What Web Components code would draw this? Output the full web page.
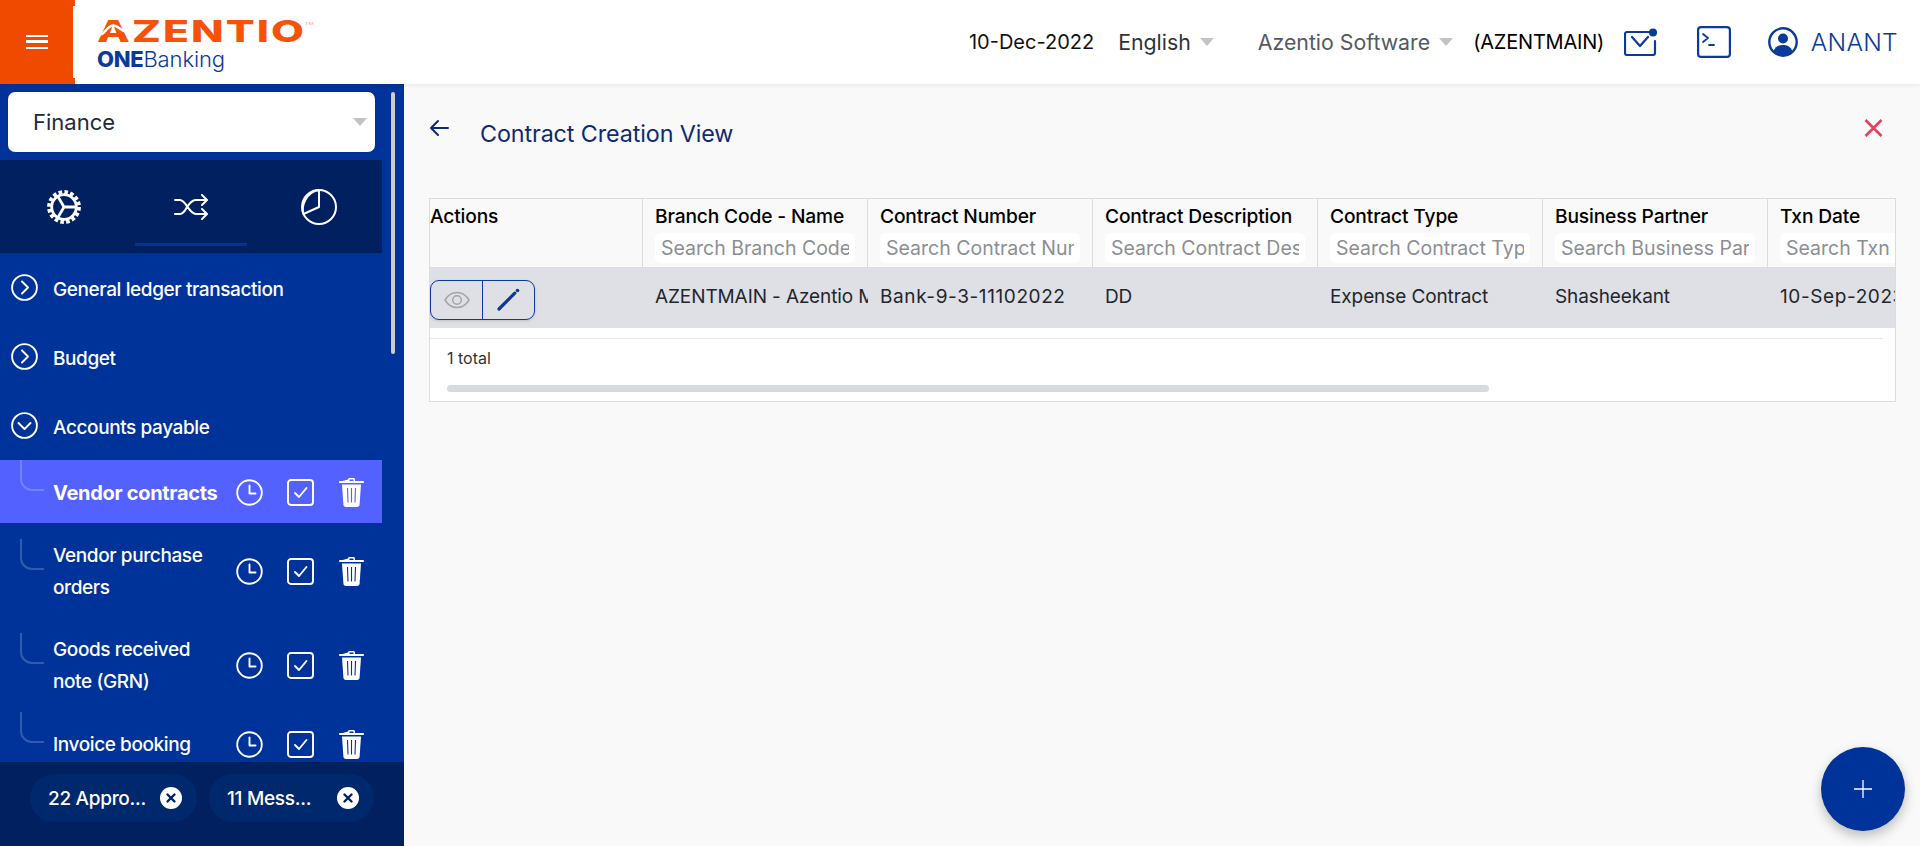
<!DOCTYPE html>
<html lang="en"><head><meta charset="utf-8"><title>Contract Creation View</title>
<style>
html,body{margin:0;height:100%;overflow:hidden;background:#f9f9f9;font-family:Inter,"Noto Sans",sans-serif}
</style></head><body>
<app-shell>
  <app-header slot="top"></app-header>
  <side-nav slot="side">
    <nav-group label="General ledger transaction"></nav-group>
    <nav-group label="Budget"></nav-group>
    <nav-group label="Accounts payable" open></nav-group>
    <nav-item active h="63">Vendor contracts</nav-item>
    <nav-item h="78">Vendor purchase<br>orders</nav-item>
    <nav-item h="63">Goods received<br>note (GRN)</nav-item>
    <nav-item h="63">Invoice booking</nav-item>
  </side-nav>
  <contract-view slot="main"></contract-view>
</app-shell>
<script>
const ICONS={
 chevR:'<svg viewBox="0 0 27 27" width="27" height="27" fill="none" stroke="#fff" stroke-width="1.9" stroke-linecap="round" stroke-linejoin="round"><circle cx="13.5" cy="13.5" r="12.4"/><path d="M11 7.5l6 6-6 6"/></svg>',
 chevD:'<svg viewBox="0 0 27 27" width="27" height="27" fill="none" stroke="#fff" stroke-width="1.9" stroke-linecap="round" stroke-linejoin="round"><circle cx="13.5" cy="13.5" r="12.4"/><path d="M7.5 11l6 6 6-6"/></svg>',
 clock:'<svg viewBox="0 0 27 27" width="27" height="27" fill="none" stroke="#fff" stroke-width="1.9" stroke-linecap="round" stroke-linejoin="round"><circle cx="13.5" cy="13.5" r="12.3"/><path d="M13.5 6.5v8h6"/></svg>',
 check:'<svg viewBox="0 0 27 27" width="27" height="27" fill="none" stroke="#fff" stroke-width="1.9" stroke-linecap="round" stroke-linejoin="round"><rect x="1" y="1" width="25" height="25" rx="3"/><path d="M8 14l4 4 7.500-9"/></svg>',
 trash:'<svg viewBox="0 0 25 29" width="25" height="29"><path fill="#fff" d="M9 1.500C9 .7 9.700 0 10.500 0h4c.8 0 1.500.7 1.500 1.500V3h8c.6 0 1 .4 1 1s-.4 1-1 1H1C.4 5 0 4.600 0 4s.4-1 1-1h2.800zM10.500 1.500V3h4V1.500z"/><path fill="#fff" d="M3 6.500h19l-1.400 20c-.1 1.400-1 2.500-2.600 2.500H7c-1.600 0-2.500-1.100-2.600-2.500z"/><path stroke="#PLACE" stroke-width="1.100" d="M8.500 10l.5 14.500M12.500 10v14.500M16.500 10l-.5 14.500"/></svg>',
 gear:'<svg viewBox="0 0 34 34" width="34" height="34" fill="none" stroke="#fff"><circle cx="17" cy="17" r="14.700" stroke-width="4.400" stroke-dasharray="3.500 2.270"/><circle cx="17" cy="17" r="12.300" stroke-width="2.800"/><path stroke-width="2.800" d="M17 17H29M17 17L11 6.600M17 17L11 27.400"/></svg>',
 shuffle:'<svg viewBox="0 0 34 26" width="34" height="26" fill="none" stroke="#fff" stroke-width="2" stroke-linecap="round" stroke-linejoin="round"><path d="M1 6h5c6 0 9 14 16 14h10M1 20h5c3 0 5-3 7-7 3-4 5-7 9-7h10"/><path d="M28 1l5 5-5 5M28 15l5 5-5 5"/></svg>',
 pie:'<svg viewBox="0 0 37 37" width="37" height="37" fill="none" stroke="#fff" stroke-width="2" stroke-linejoin="round"><circle cx="19" cy="19" r="17"/><path d="M19 2v17L3.500 26C1 18 6 4 19 2z"/></svg>',
 mail:'<svg viewBox="0 0 34 28" width="34" height="28" fill="none" stroke="#0b3a99" stroke-width="2.200" stroke-linecap="round" stroke-linejoin="round"><path d="M26 4H3a2 2 0 0 0-2 2v19a2 2 0 0 0 2 2h26a2 2 0 0 0 2-2V13"/><path d="M8 9l8 9 8-9"/><circle cx="29" cy="4.500" r="4" fill="#0b3a99" stroke="none"/></svg>',
 term:'<svg viewBox="0 0 34 32" width="34" height="32" fill="none" stroke="#0b3a99" stroke-width="2.200" stroke-linecap="round" stroke-linejoin="round"><rect x="1.100" y="1.100" width="31.800" height="29.800" rx="3"/><path d="M6 8l5 4-5 4M12 19h5" stroke-width="1.800"/></svg>',
 user:'<svg viewBox="0 0 30 30" width="30" height="30"><circle cx="15" cy="15" r="13.700" fill="none" stroke="#0b3a99" stroke-width="2.400"/><circle cx="15" cy="11.500" r="5" fill="#0b3a99"/><path fill="#0b3a99" d="M5.500 24.500c1.500-4.500 5-6.500 9.500-6.500s8 2 9.500 6.500C22 27.500 18.500 29 15 29s-7-1.500-9.500-4.500z"/></svg>',
 back:'<svg viewBox="0 0 20 18" width="20" height="18" fill="none" stroke="#0f2a72" stroke-width="2" stroke-linecap="round" stroke-linejoin="round"><path d="M19 9H2M9 2L2 9l7 7"/></svg>',
 close:'<svg viewBox="0 0 19 18" width="19" height="18" fill="none" stroke="#e8405a" stroke-width="2.600"><path d="M1.500 1l16 16M17.500 1l-16 16"/></svg>',
 eye:'<svg viewBox="0 0 26 18" width="26" height="18" fill="none" stroke="#a3a5a8" stroke-width="1.500"><path d="M1 9c3-5 7-7.500 12-7.500S22 4 25 9c-3 5-7 7.500-12 7.500S4 14 1 9z"/><circle cx="13" cy="9" r="4.300"/></svg>',
 pen:'<svg viewBox="0 0 24 24" width="24" height="24" fill="none" stroke="#0b3a99" stroke-linecap="round"><path stroke-width="3.200" d="M2 21L17.800 5.200"/><path stroke-width="3.600" d="M20.500 2.500h.01"/></svg>',
 x:'<svg viewBox="0 0 22 22" width="22" height="22"><circle cx="11" cy="11" r="11" fill="#fff"/><path stroke="#002060" stroke-width="2.400" stroke-linecap="round" d="M7.500 7.500l7 7M14.500 7.500l-7 7"/></svg>',
 plus:'<svg viewBox="0 0 18 18" width="18" height="18" stroke="#fff" stroke-width="1.300"><path d="M9 0v18M0 9h18"/></svg>'
};
const ic=(n,bg)=>ICONS[n].replace('#PLACE',bg||'#003399');
class Base extends HTMLElement{
  render(css,html){this.attachShadow({mode:'open'}).innerHTML=`<style>${css}</style>${html}`}
}
customElements.define('app-shell',class extends Base{connectedCallback(){this.render(`
  :host{display:grid;grid-template:84px 1fr/404px 1fr;width:1920px;height:846px;position:relative}
  .top{grid-column:1/3;position:relative;z-index:2}
  .main{min-width:0;overflow:hidden}
  .fab{position:absolute;left:1821px;top:747px;width:84px;height:84px;border-radius:50%;background:#003399;display:flex;align-items:center;justify-content:center;box-shadow:0 5px 12px rgba(0,0,0,.25)}
  `,`<div class="top"><slot name="top"></slot></div><slot name="side"></slot><div class="main"><slot name="main"></slot></div><div class="fab">${ic('plus')}</div>`)}});
customElements.define('az-logo',class extends Base{connectedCallback(){this.render(`
  :host{display:block;align-self:flex-start;padding-left:22px;width:240px;color:#0b3a99;position:relative}
  .a{display:block;height:34px;margin-top:7px;font:800 30px/34px Inter,sans-serif;color:#f85208;letter-spacing:1.500px;transform:scaleX(1.42);transform-origin:left center;white-space:nowrap}
  .tm{font-size:4px;font-weight:400;vertical-align:17px;color:#f9a;letter-spacing:0;margin-left:-1px}
  .b{display:block;font:300 22px/26px Inter,sans-serif;margin-top:5px;letter-spacing:-.1px;white-space:nowrap}
  b{font-weight:800;letter-spacing:-.3px}
  svg{position:absolute;left:22px;top:12px}`,
  `<span class="a">AZENTIO<span class="tm">TM</span></span><svg width="34" height="24" viewBox="0 0 34 24" fill="none"><path d="M4 22.500C9 21 10 13.500 16.500 13.500 22 13.500 24 20 30 19.500" stroke="#fff" stroke-width="2.400"/></svg><span class="b"><b>ONE</b>Banking</span>`)}});
customElements.define('caret-down',class extends Base{connectedCallback(){this.render(`
  :host{display:inline-block;width:0;height:0;border:7px solid transparent;border-top:8px solid #c4c4c4;border-bottom:0}`,``)}});
customElements.define('app-header',class extends Base{connectedCallback(){this.render(`
  :host{display:flex;align-items:center;height:84px;background:#fff;box-shadow:0 1px 5px rgba(0,0,0,.08);font-family:Inter,sans-serif}
  .menu{width:75px;height:84px;flex:none;display:flex;align-items:center;justify-content:center;padding-right:2px;box-sizing:border-box;
    background:linear-gradient(#f04a00,#f04a00) 0 0/73px 100% no-repeat,linear-gradient(#f04a00,#f04a00) 0 0/75px 6px no-repeat,linear-gradient(#f04a00,#f04a00) 0 100%/75px 6px no-repeat}
  .burger{width:22px;height:14px;border-top:2.500px solid #fff;border-bottom:2.500px solid #fff;position:relative;box-sizing:border-box}
  .burger:after{content:"";position:absolute;left:0;right:0;top:3.250px;height:2.500px;background:#fff}
  .sp{flex:1}
  .date{font-size:20px;color:#111;margin-right:24px}
  .lang{font-size:21.300px;color:#2e333b;margin-right:9px}
  .org{font-size:21.300px;color:#555a61;margin-right:9px}
  caret-down.c1{margin-right:44px}caret-down.c2{margin-right:20px}
  .code{font-size:20px;color:#000;font-weight:400;margin-right:20px;letter-spacing:-.2px}
  .i{display:flex;flex:none}
  .name{font-size:24.500px;color:#0b3a99;font-weight:300;margin-left:12.500px;margin-right:22px;letter-spacing:.3px}
  `,`<div class="menu"><div class="burger"></div></div><az-logo></az-logo><div class="sp"></div>
  <span class="date">10-Dec-2022</span><span class="lang">English</span><caret-down class="c1"></caret-down>
  <span class="org">Azentio Software</span><caret-down class="c2"></caret-down>
  <span class="code">(AZENTMAIN)</span><span class="i" style="margin-right:39px">${ic('mail')}</span>
  <span class="i" style="margin-right:37px">${ic('term')}</span><span class="i">${ic('user')}</span><span class="name">ANANT</span>`)}});
customElements.define('side-nav',class extends Base{connectedCallback(){this.render(`
  :host{display:flex;flex-direction:column;background:#003399;height:762px;position:relative;font-family:Inter,sans-serif;overflow:hidden}
  .sel{margin:8px 29px 8px 8px;height:60px;background:#fff;border-radius:7px;display:flex;align-items:center;justify-content:space-between;padding:0 8px 0 25px;font-size:22px;color:#222a35;box-sizing:border-box;flex:none;box-shadow:0 0 2px rgba(0,0,0,.3)}
  .tabs{width:382px;height:93px;background:#002060;display:flex;flex:none;position:relative}
  .tab{flex:none;display:flex;align-items:center;justify-content:center;height:93px}
  .ind{position:absolute;left:135px;top:83px;width:112px;height:3px;background:#003399}
  .list{flex:1;overflow:hidden;min-height:0}
  .bar{position:absolute;left:391px;top:8px;width:4px;height:262px;border-radius:2px;background:#ccc}
  .foot{flex:none;height:84px;background:#002060;display:flex;align-items:flex-start;gap:12px;padding:12px 0 0 30px;box-sizing:border-box;position:relative;z-index:1}
  `,`<div class="sel">Finance<caret-down></caret-down></div>
  <div class="tabs"><span class="tab" style="margin-left:47px;width:34px">${ic('gear')}</span>
    <span class="tab" style="margin-left:93px;width:34px">${ic('shuffle')}</span>
    <span class="tab" style="margin-left:92px;width:37px">${ic('pie')}</span><span class="ind"></span></div>
  <div class="list"><slot></slot></div><div class="bar"></div>
  <div class="foot"><note-chip w="167">22 Appro...</note-chip><note-chip w="165">11 Mess...</note-chip></div>`)}});
customElements.define('nav-group',class extends Base{connectedCallback(){this.render(`
  :host{display:flex;align-items:center;height:69px;gap:15px;padding-left:11px;color:#fff;font-size:19px;font-weight:500;letter-spacing:-.4px}
  span{padding-top:3px}
  svg{flex:none;display:block}`,`${ic(this.hasAttribute('open')?'chevD':'chevR')}<span>${this.getAttribute('label')}</span>`)}});
customElements.define('nav-item',class extends Base{connectedCallback(){
  const act=this.hasAttribute('active');const bg=act?'#5361ff':'#003399';this.render(`
  :host{display:flex;align-items:flex-start;width:382px;height:${this.getAttribute('h')}px;margin-bottom:16px;flex:none;color:#fff;font-size:${act?20:19}px;font-weight:${act?700:500};line-height:32px;letter-spacing:${act?-.3:-.4}px;position:relative;background:${act?bg:'transparent'}}
  .l{position:absolute;left:20px;top:0;width:24px;height:31px;border-left:2px solid rgba(255,255,255,.2);border-bottom:2px solid rgba(255,255,255,.2);border-bottom-left-radius:12px;box-sizing:border-box}
  .t{width:183px;margin-left:53px;min-height:63px;padding-top:1px;display:flex;align-items:center;flex:none;white-space:nowrap}
  .ic{display:flex;align-items:center;height:64px;flex:none}
  `,`<div class="l"></div><div class="t"><span><slot></slot></span></div>
  <span class="ic">${ic('clock')}</span><span class="ic" style="margin-left:24px">${ic('check')}</span><span class="ic" style="margin-left:25px">${ic('trash',bg)}</span>`)}});
customElements.define('note-chip',class extends Base{connectedCallback(){this.render(`
  :host{display:flex;align-items:center;justify-content:space-between;width:${this.getAttribute('w')}px;height:48px;border-radius:24px;background:#00286c;color:#fff;font-size:19px;font-weight:500;padding:0 15px 0 18px;box-sizing:border-box;letter-spacing:-.3px}
  span{padding-top:1px}
  svg{display:block;flex:none}
  `,`<span><slot></slot></span>${ic('x')}`)}});
customElements.define('head-cell',class extends Base{connectedCallback(){this.render(`
  :host{display:block;box-sizing:border-box;padding:5px 0 0 12px;border-right:1px solid #ddd;overflow:hidden;height:68px;flex:none}
  .l{font-size:19.200px;font-weight:500;color:#000;line-height:24px;white-space:nowrap;letter-spacing:-.15px}
  .s{margin-top:5px;width:200px;height:30px;background:#fff;border-radius:6px;box-sizing:border-box;padding:0 6px;display:flex}
  .s span{flex:1;overflow:hidden;font-size:19.500px;line-height:30px;color:#8b8e93;white-space:nowrap}
  `,`<div class="l">${this.getAttribute('label')}</div><div class="s"><span>Search ${this.getAttribute('ph')}</span></div>`)}});
customElements.define('contract-view',class extends Base{connectedCallback(){
  const cols=[['Branch Code - Name','Branch Code - Name'],['Contract Number','Contract Number'],['Contract Description','Contract Description'],['Contract Type','Contract Type'],['Business Partner','Business Partner'],['Txn Date','Txn Date']];
  const vals=['AZENTMAIN - Azentio Main Branch','Bank-9-3-11102022','DD','Expense Contract','Shasheekant','10-Sep-2023'];
  this.render(`
  :host{display:block;padding:0 24px 0 25px;font-family:Inter,sans-serif}
  .ttl{display:flex;align-items:center;height:114px;box-sizing:border-box;padding-bottom:16px}
  .ttl .b{display:flex;margin-right:31px;margin-top:-10px}
  .ttl h1{font-size:23.300px;font-weight:400;color:#0f2a72;margin:0;flex:1;letter-spacing:-.1px}
  .ttl .x{display:flex;margin-right:13px;margin-top:-10px}
  .tb{border:1px solid #ddd;height:204px;box-sizing:border-box;background:#fff;overflow:hidden}
  .r{display:grid;grid-template-columns:213px repeat(6,225px);width:1563px}
  .hd{background:#f9f9f9;border-bottom:1px solid #ddd}
  .act{box-sizing:border-box;padding:5px 0 0 0;font-size:19.200px;font-weight:500;line-height:24px;color:#000;border-right:1px solid #ddd;letter-spacing:-.15px;height:68px}
  .row{background:#dee0e5;height:60px}
  .c{font-size:19px;color:#22262c;line-height:58px;padding-left:12px;white-space:nowrap;overflow:hidden;letter-spacing:-.1px}
  .c.n{letter-spacing:.6px}
  .g{display:flex;margin:12px 0 0 0;width:105px;height:40px;border:1px solid #0b3a99;border-radius:9px;box-sizing:border-box;box-shadow:0 1px 3px rgba(0,0,0,.15)}
  .g span{flex:1;display:flex;align-items:center;justify-content:center}
  .g span+span{border-left:1px solid #0b3a99}
  .ft{margin:10px 12px 0 0;border-top:1px solid #e5e5e5;padding:0 0 0 17px}
  .tot{font-size:16px;line-height:31px;color:#333;margin-top:4px}
  .sb{margin-top:11px;width:1042px;height:7px;border-radius:4px;background:#d5dbdf}
  `,`<div class="ttl"><span class="b">${ic('back')}</span><h1>Contract Creation View</h1><span class="x">${ic('close')}</span></div>
  <div class="tb"><div class="r hd"><div class="act">Actions</div>${cols.map(c=>`<head-cell label="${c[0]}" ph="${c[1]}"></head-cell>`).join('')}</div>
  <div class="r row"><div><div class="g"><span>${ic('eye')}</span><span>${ic('pen')}</span></div></div>${vals.map(v=>`<div class="c${/\d{4}/.test(v)?' n':''}">${v}</div>`).join('')}</div>
  <div class="ft"><div class="tot">1 total</div><div class="sb"></div></div></div>`)}});
</script>
</body></html>
